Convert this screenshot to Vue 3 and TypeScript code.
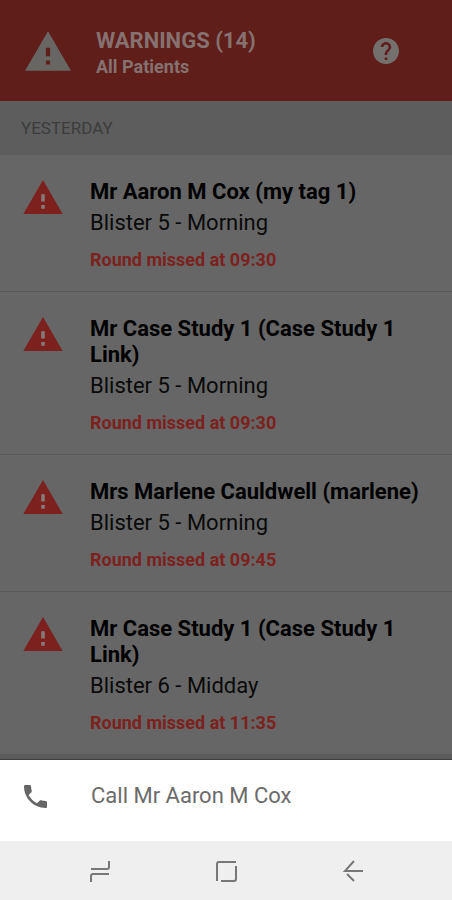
<script setup lang="ts">
interface Warning {
  id: number
  name: string
  blister: string
  status: string
}

const warnings: Warning[] = [
  { id: 1, name: 'Mr Aaron M Cox (my tag 1)', blister: 'Blister 5 - Morning', status: 'Round missed at 09:30' },
  { id: 2, name: 'Mr Case Study 1 (Case Study 1 Link)', blister: 'Blister 5 - Morning', status: 'Round missed at 09:30' },
  { id: 3, name: 'Mrs Marlene Cauldwell (marlene)', blister: 'Blister 5 - Morning', status: 'Round missed at 09:45' },
  { id: 4, name: 'Mr Case Study 1 (Case Study 1 Link)', blister: 'Blister 6 - Midday', status: 'Round missed at 11:35' },
]
</script>

<template>
  <div class="screen">
    <header class="header">
      <svg class="header-icon" viewBox="1 2 22 19" aria-hidden="true">
        <path d="M1 21h22L12 2 1 21zm12-3h-2v-2h2v2zm0-4h-2v-4h2v4z" />
      </svg>
      <div class="header-text">
        <h1>WARNINGS (14)</h1>
        <p>All Patients</p>
      </div>
      <button class="help" type="button" aria-label="Help">
        <svg viewBox="2 2 20 20" aria-hidden="true">
          <path d="M12 2C6.48 2 2 6.48 2 12s4.480 10 10 10 10-4.480 10-10S17.520 2 12 2zm1 17h-2v-2h2v2zm2.070-7.750l-.9.920C13.450 12.900 13 13.500 13 15h-2v-.5c0-1.100.45-2.100 1.170-2.830l1.240-1.260c.37-.36.590-.86.590-1.410 0-1.100-.9-2-2-2s-2 .9-2 2H8c0-2.210 1.790-4 4-4s4 1.790 4 4c0 .88-.36 1.680-.93 2.250z" />
        </svg>
      </button>
    </header>

    <main>
      <h2 class="day">YESTERDAY</h2>
      <ul class="list">
        <li v-for="w in warnings" :key="w.id" class="item">
          <svg class="item-icon" viewBox="1 2 22 19" aria-hidden="true">
            <path d="M1 21h22L12 2 1 21z" />
            <path class="mark" d="M13 18h-2v-2h2v2zm0-4h-2v-4h2v4z" />
          </svg>
          <div class="item-text">
            <h3>{{ w.name }}</h3>
            <p class="blister">{{ w.blister }}</p>
            <p class="status">{{ w.status }}</p>
          </div>
        </li>
      </ul>
    </main>

    <div class="bottom">
      <button class="call" type="button">
        <svg viewBox="3 3 18 18" aria-hidden="true">
          <path d="M6.620 10.790c1.440 2.830 3.760 5.140 6.590 6.590l2.200-2.200c.27-.27.670-.36 1.020-.24 1.120.37 2.330.57 3.570.57.55 0 1 .45 1 1V20c0 .55-.45 1-1 1-9.390 0-17-7.610-17-17 0-.55.45-1 1-1h3.500c.55 0 1 .45 1 1 0 1.250.2 2.450.57 3.570.11.350.03.740-.25 1.020l-2.200 2.200z" />
        </svg>
        <span>Call Mr Aaron M Cox</span>
      </button>
      <nav class="system">
        <button type="button" aria-label="Recent apps">
          <svg viewBox="0 0 22 22" aria-hidden="true">
            <path d="M2 9H18Q20 9 20 7V1M20 14H4Q2 14 2 16V22" />
          </svg>
        </button>
        <button type="button" aria-label="Home">
          <svg viewBox="0 0 22 22" aria-hidden="true">
            <path d="M2 21V4Q2 2 4 2H21M21 6V19Q21 21 19 21H6" />
          </svg>
        </button>
        <button type="button" aria-label="Back">
          <svg viewBox="0 0 22 22" aria-hidden="true">
            <path d="M22 11H4L13 1M6 14L13 21" />
          </svg>
        </button>
      </nav>
    </div>
  </div>
</template>

<style>
body {
  margin: 0;
  background: #5d5d5d;
}
</style>

<style scoped>
.screen {
  height: 100vh;
  display: flex;
  flex-direction: column;
  overflow: hidden;
  font-family: Roboto, 'Liberation Sans', sans-serif;
}

h1,
h2,
h3,
p,
ul {
  margin: 0;
  padding: 0;
}

button {
  border: 0;
  padding: 0;
  background: none;
  font: inherit;
  cursor: pointer;
}

svg {
  display: block;
  flex: none;
}

.header {
  flex: none;
  display: flex;
  align-items: center;
  box-sizing: border-box;
  height: 101px;
  padding: 0 53px 0 25px;
  background: #5f1e1a;
  color: #857270;
}

.header-icon {
  width: 46px;
  height: 40px;
  fill: #686662;
}

.header-text {
  flex: 1;
  padding: 4px 0 0 25px;
}

.header h1 {
  font-size: 22px;
  line-height: 28px;
  font-weight: 700;
}

.header p {
  font-size: 18px;
  line-height: 24px;
  font-weight: 700;
}

.help svg {
  width: 26px;
  height: 26px;
  fill: #74706e;
}

main {
  flex: 1;
  min-height: 0;
  overflow: hidden;
}

.day {
  padding: 0 21px;
  background: #5d5d5d;
  color: #3a3c3c;
  font-size: 17px;
  line-height: 54px;
  font-weight: 400;
}

.list {
  list-style: none;
}

.item {
  display: flex;
  gap: 27px;
  padding: 24px 22px 21px 23px;
  border-bottom: 1px solid #5a5a5a;
  background: #666666;
}

.item-icon {
  width: 40px;
  height: 34px;
  margin-top: 1px;
  fill: #7c211d;
}

.item-icon .mark {
  fill: #857a78;
}

.item-text {
  flex: 1;
  min-width: 0;
}

.item h3 {
  color: #000000;
  font-size: 22px;
  line-height: 26px;
  font-weight: 700;
}

.blister {
  margin-top: 5px;
  color: #0a0a0a;
  font-size: 22px;
  line-height: 26px;
}

.item .status {
  margin-top: 14px;
  color: #7c211d;
  font-size: 18px;
  line-height: 20px;
  font-weight: 700;
}

.bottom {
  flex: none;
  position: relative;
  box-shadow: 0 -1px 1px rgba(0, 0, 0, 0.3);
}

.call {
  display: flex;
  align-items: center;
  gap: 44px;
  box-sizing: border-box;
  width: 100%;
  height: 81px;
  padding: 0 24px 9px;
  background: #ffffff;
  color: #6b6b6b;
  font-size: 22px;
  line-height: 26px;
  text-align: left;
}

.call svg {
  width: 23px;
  height: 23px;
  fill: #666666;
}

.system {
  display: flex;
  justify-content: center;
  gap: 104px;
  height: 59px;
  background: #efefef;
}

.system svg {
  width: 22px;
  height: 22px;
  fill: none;
  stroke: #777777;
  stroke-width: 2;
}
</style>
